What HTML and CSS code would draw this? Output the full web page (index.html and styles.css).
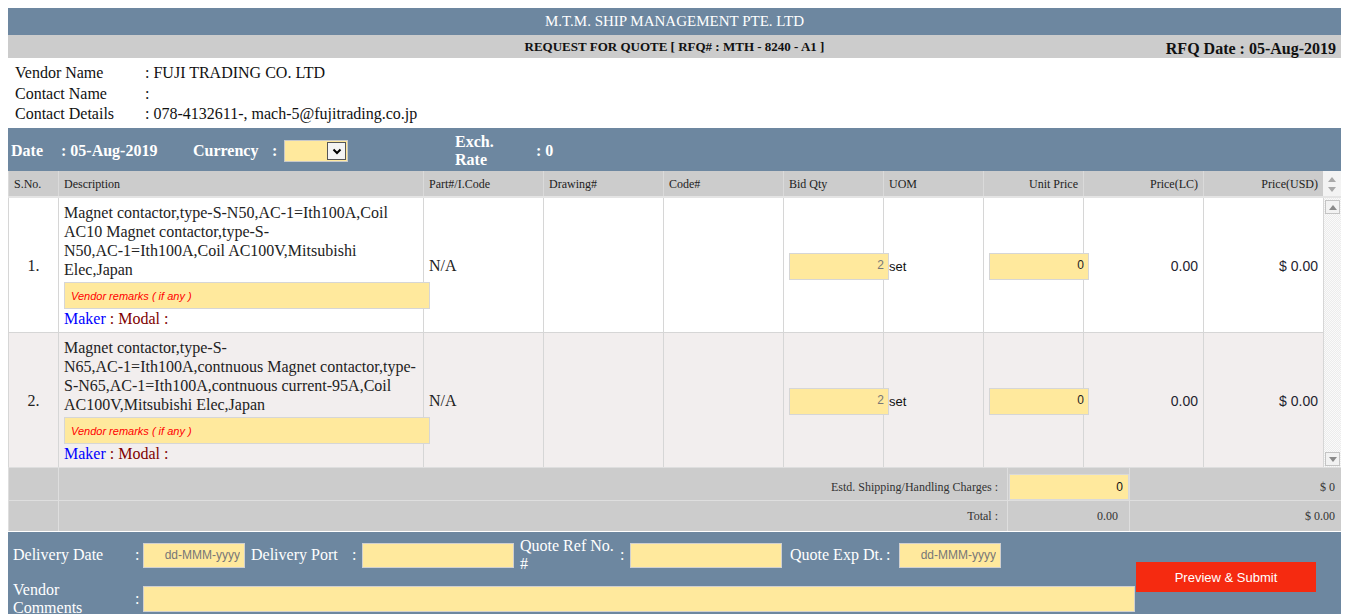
FILE: index.html
```html
<!DOCTYPE html>
<html>
<head>
<meta charset="utf-8">
<title>Request For Quote</title>
<link rel="stylesheet" href="styles.css">
</head>
<body>
<div class="page">
  <div class="title">M.T.M. SHIP MANAGEMENT PTE. LTD</div>
  <div class="subtitle">
    <span></span>
    <span class="rfq">REQUEST FOR QUOTE [ RFQ# : MTH - 8240 - A1 ]</span>
    <span class="rfq-date">RFQ Date : 05-Aug-2019</span>
  </div>

  <div class="vendor">
    <div>Vendor Name</div><div>: FUJI TRADING CO. LTD</div>
    <div>Contact Name</div><div>:</div>
    <div>Contact Details</div><div>: 078-4132611-, mach-5@fujitrading.co.jp</div>
  </div>

  <div class="datebar">
    <div class="db-date">Date</div>
    <div class="db-dateval">: 05-Aug-2019</div>
    <div class="db-cur">Currency</div>
    <div class="db-colon">:</div>
    <div class="select">
      <span class="select-field"></span>
      <span class="select-btn"><svg width="10" height="7" viewBox="0 0 10 7"><polyline points="1.5,1.5 5,5 8.5,1.5" fill="none" stroke="#000" stroke-width="2"/></svg></span>
    </div>
    <div class="db-exch">Exch. Rate</div>
    <div class="db-exchval">: 0</div>
  </div>

  <div class="thead">
    <div class="hc">S.No.</div>
    <div class="hc">Description</div>
    <div class="hc">Part#/I.Code</div>
    <div class="hc">Drawing#</div>
    <div class="hc">Code#</div>
    <div class="hc">Bid Qty</div>
    <div class="hc">UOM</div>
    <div class="hc right">Unit Price</div>
    <div class="hc right">Price(LC)</div>
    <div class="hc right">Price(USD)</div>
    <div class="hscroll">
      <svg width="8" height="5" viewBox="0 0 8 5"><polygon points="0,5 4,0 8,5" fill="#a9a9a9"/></svg>
      <svg width="8" height="5" viewBox="0 0 8 5"><polygon points="0,0 8,0 4,5" fill="#a9a9a9"/></svg>
    </div>
  </div>

  <div class="tbody">
    <div class="rows">
      <div class="row">
        <div class="c center">1.</div>
        <div class="c desc">
          <div class="desc-text">Magnet contactor,type-S-N50,AC-&#8288;1=Ith100A,Coil AC10 Magnet contactor,type-S-N50,AC-&#8288;1=Ith100A,Coil AC100V,Mitsubishi Elec,Japan</div>
          <input class="remarks" type="text" placeholder="Vendor remarks ( if any )">
          <div class="maker"><span class="mk">Maker</span> : Modal :</div>
        </div>
        <div class="c">N/A</div>
        <div class="c"></div>
        <div class="c"></div>
        <div class="c"><input class="num qty" type="text" value="2"></div>
        <div class="c uom">set</div>
        <div class="c"><input class="num price" type="text" value="0"></div>
        <div class="c right amount">0.00</div>
        <div class="c right amount">$ 0.00</div>
      </div>
      <div class="row alt">
        <div class="c center">2.</div>
        <div class="c desc">
          <div class="desc-text">Magnet contactor,type-S-N65,AC-&#8288;1=Ith100A,contnuous Magnet contactor,type-S-N65,AC-&#8288;1=Ith100A,contnuous current-&#8288;95A,Coil AC100V,Mitsubishi Elec,Japan</div>
          <input class="remarks" type="text" placeholder="Vendor remarks ( if any )">
          <div class="maker"><span class="mk">Maker</span> : Modal :</div>
        </div>
        <div class="c">N/A</div>
        <div class="c"></div>
        <div class="c"></div>
        <div class="c"><input class="num qty" type="text" value="2"></div>
        <div class="c uom">set</div>
        <div class="c"><input class="num price" type="text" value="0"></div>
        <div class="c right amount">0.00</div>
        <div class="c right amount">$ 0.00</div>
      </div>
    </div>
    <div class="vscroll">
      <div class="sbtn"><svg width="8" height="5" viewBox="0 0 8 5"><polygon points="0,5 4,0 8,5" fill="#8a8a8a"/></svg></div>
      <div class="sbtn"><svg width="8" height="5" viewBox="0 0 8 5"><polygon points="0,0 8,0 4,5" fill="#8a8a8a"/></svg></div>
    </div>
  </div>

  <div class="totals">
    <div class="trow first">
      <div class="tc"></div>
      <div class="tc right lbl">Estd. Shipping/Handling Charges :</div>
      <div class="tc inp"><input class="ship" type="text" value="0"></div>
      <div class="tc right usd">$ 0</div>
    </div>
    <div class="trow">
      <div class="tc"></div>
      <div class="tc right lbl">Total :</div>
      <div class="tc right lc">0.00</div>
      <div class="tc right usd">$ 0.00</div>
    </div>
  </div>

  <div class="bottom">
    <div class="bl first">Delivery Date</div>
    <div class="bcolon">:</div>
    <div><input class="binput date" type="text" placeholder="dd-MMM-yyyy"></div>
    <div class="bl">Delivery Port</div>
    <div class="bcolon">:</div>
    <div><input class="binput wide" type="text"></div>
    <div class="bl">Quote Ref No. #</div>
    <div class="bcolon">:</div>
    <div><input class="binput wide" type="text"></div>
    <div class="bl exp">Quote Exp Dt.</div>
    <div class="bcolon">:</div>
    <div><input class="binput date" type="text" placeholder="dd-MMM-yyyy"></div>
    <div class="submit-cell"><button class="submit" type="button">Preview &amp; Submit</button></div>

    <div class="bl first">Vendor<br>Comments</div>
    <div class="bcolon">:</div>
    <div class="comments-cell"><textarea class="comments"></textarea></div>
  </div>
</div>
</body>
</html>
```

FILE: styles.css
```css
* {
  box-sizing: border-box;
}

body {
  margin: 8px;
  font-family: "Liberation Serif", "Times New Roman", serif;
  color: #222;
  background: #fff;
}

.page {
  width: 1333px;
}

.title {
  height: 27px;
  line-height: 27px;
  background: #6d87a0;
  color: #fff;
  text-align: center;
  font-size: 15px;
}

.subtitle {
  height: 23px;
  background: #cccccc;
  display: grid;
  grid-template-columns: 1fr auto 1fr;
}

.rfq {
  font-size: 13px;
  font-weight: bold;
  line-height: 23px;
  color: #111;
}

.rfq-date {
  justify-self: end;
  align-self: end;
  font-size: 16px;
  font-weight: bold;
  line-height: 18px;
  padding-right: 5px;
  color: #111;
}

.vendor {
  height: 70px;
  padding: 5px 0 0 7px;
  display: grid;
  grid-template-columns: 130px auto;
  grid-auto-rows: 20.5px;
  align-content: start;
  font-size: 16px;
  line-height: 20.5px;
  color: #111;
}

.datebar {
  height: 43px;
  padding-top: 3px;
  background: #6d87a0;
  color: #fff;
  font-weight: bold;
  font-size: 16px;
  line-height: 18px;
  display: flex;
  align-items: center;
}

.db-date { width: 50px; padding-left: 3px; }
.db-dateval { width: 132px; padding-left: 3px; }
.db-cur { width: 79px; padding-left: 3px; }
.db-colon { width: 12px; padding-left: 3px; }

.select {
  margin-left: 3px;
  width: 64px;
  height: 22px;
  display: flex;
  background: #ffe99d;
  border: 1px solid #c9c9c9;
}

.select-field {
  flex: 1;
}

.select-btn {
  width: 19px;
  margin: 1px 1px 1px 0;
  background: #f4f4f4;
  border: 1px solid #555;
  display: flex;
  align-items: center;
  justify-content: center;
}

.db-exch {
  margin-left: 104px;
  width: 84px;
  padding: 0 30px 0 3px;
}

.thead {
  display: grid;
  grid-template-columns: 50px 365px 120px 120px 120px 100px 100px 100px 120px 120px 18px;
  height: 27px;
  background: #cccccc;
  border-bottom: 2px solid #e4e4e4;
  font-size: 12px;
  color: #222;
}

.hc {
  display: flex;
  align-items: center;
  padding: 2px 5px 0;
  border-left: 1px solid #dadada;
}

.hc.right {
  justify-content: flex-end;
}

.hscroll {
  background: #f3f3f3;
  display: flex;
  flex-direction: column;
  align-items: center;
  justify-content: space-around;
  padding: 3px 0 2px;
}

.tbody {
  display: flex;
}

.rows {
  width: 1315px;
}

.row {
  display: grid;
  grid-template-columns: 50px 365px 120px 120px 120px 100px 100px 100px 120px 120px;
  background: #fff;
}

.row.alt {
  background: #f2eeee;
  border-top: 1px solid #d6d6d6;
}

.c {
  border-left: 1px solid #d6d6d6;
  padding: 2px 5px 0;
  display: flex;
  align-items: center;
  font-size: 16px;
  color: #222;
}

.c.center {
  justify-content: center;
}

.c.right {
  justify-content: flex-end;
}

.c.desc {
  display: block;
  padding: 5px 5px 4px 5px;
}

.desc-text {
  line-height: 19px;
}

.remarks {
  position: relative;
  display: block;
  width: 366px;
  height: 27px;
  margin-top: 3px;
  padding: 0 6px;
  background: #ffe99d;
  border: 1px solid #d6d6d6;
  font-family: "Liberation Sans", Arial, sans-serif;
  font-size: 11px;
  outline: none;
}

.remarks::placeholder {
  color: #f00;
  font-style: italic;
}

.maker {
  line-height: 19px;
  color: #800000;
}

.mk {
  color: #0000ff;
}

.num {
  position: relative;
  width: 100px;
  height: 27px;
  padding: 0 4px 3px;
  background: #ffe99d;
  border: 1px solid #d6d6d6;
  font-family: "Liberation Sans", Arial, sans-serif;
  font-size: 12px;
  text-align: right;
  outline: none;
}

.num.qty {
  color: #777;
}

.num.price {
  color: #222;
}

.uom {
  font-family: "Liberation Sans", Arial, sans-serif;
  font-size: 13px;
  color: #111;
}

.c.amount {
  font-family: "Liberation Sans", Arial, sans-serif;
  font-size: 14px;
  color: #1f2430;
}

.vscroll {
  width: 18px;
  display: flex;
  flex-direction: column;
  justify-content: space-between;
  padding: 2px 1px 1px;
  background: repeating-conic-gradient(#ececec 0 25%, #fafafa 0 50%) 0 0 / 2px 2px;
  border-left: 1px solid #d6d6d6;
}

.sbtn {
  height: 14px;
  background: #f2f2f2;
  border: 1px solid #c4c4c4;
  display: flex;
  align-items: center;
  justify-content: center;
}

.totals {
  background: #cccccc;
  border-top: 1px solid #dedede;
  font-size: 12px;
  color: #333;
}

.trow {
  display: grid;
  grid-template-columns: 50px 949px 122px 212px;
  height: 31px;
  border-top: 1px solid #dedede;
}

.trow.first {
  height: 32px;
  border-top: none;
}

.tc {
  display: flex;
  align-items: center;
  border-left: 1px solid #dedede;
}

.trow.first .tc {
  padding-top: 6px;
}

.tc.right {
  justify-content: flex-end;
}

.tc.lbl {
  padding-right: 9px;
}

.tc.lc {
  padding-right: 11px;
}

.tc.usd {
  padding-right: 6px;
}

.tc.inp {
  padding-left: 1px;
}

.ship {
  width: 120px;
  height: 26px;
  padding: 0 5px;
  background: #ffe99d;
  border: 1px solid #d9d9d9;
  font-family: "Liberation Sans", Arial, sans-serif;
  font-size: 12px;
  color: #111;
  text-align: right;
  outline: none;
}

.bottom {
  margin-top: 1px;
  background: #6d87a0;
  color: #fff;
  font-size: 16px;
  line-height: 18px;
  padding-top: 5px;
  display: grid;
  grid-template-columns: 125px 10px 105px 102px 12px 155px 101px 12px 155px 99px 15px 237px 205px;
  grid-template-rows: 36px 36px;
  row-gap: 8px;
  align-items: center;
}

.bl {
  padding-left: 3px;
}

.bl.first,
.bl.exp {
  padding-left: 5px;
}

.bcolon {
  padding-left: 2px;
}

.binput {
  display: block;
  height: 25px;
  background: #ffe99d;
  border: 1px solid #d0d0d0;
  font-family: "Liberation Sans", Arial, sans-serif;
  font-size: 12px;
  color: #333;
  padding: 0 4px;
  outline: none;
}

.binput.date {
  width: 102px;
  text-align: right;
}

.binput.wide {
  width: 152px;
}

.binput::placeholder {
  color: #777;
}

.submit-cell {
  grid-column: 13;
  grid-row: 1 / span 2;
}

.submit {
  display: block;
  width: 180px;
  height: 30px;
  background: #f52a10;
  border: none;
  color: #fff;
  font-family: "Liberation Sans", Arial, sans-serif;
  font-size: 13px;
  padding: 0;
}

.comments-cell {
  grid-column: 3 / span 10;
}

.comments {
  display: block;
  width: 992px;
  height: 26px;
  background: #ffe99d;
  border: 1px solid #d0d0d0;
  resize: none;
  outline: none;
  font-family: "Liberation Sans", Arial, sans-serif;
  font-size: 12px;
}
```
